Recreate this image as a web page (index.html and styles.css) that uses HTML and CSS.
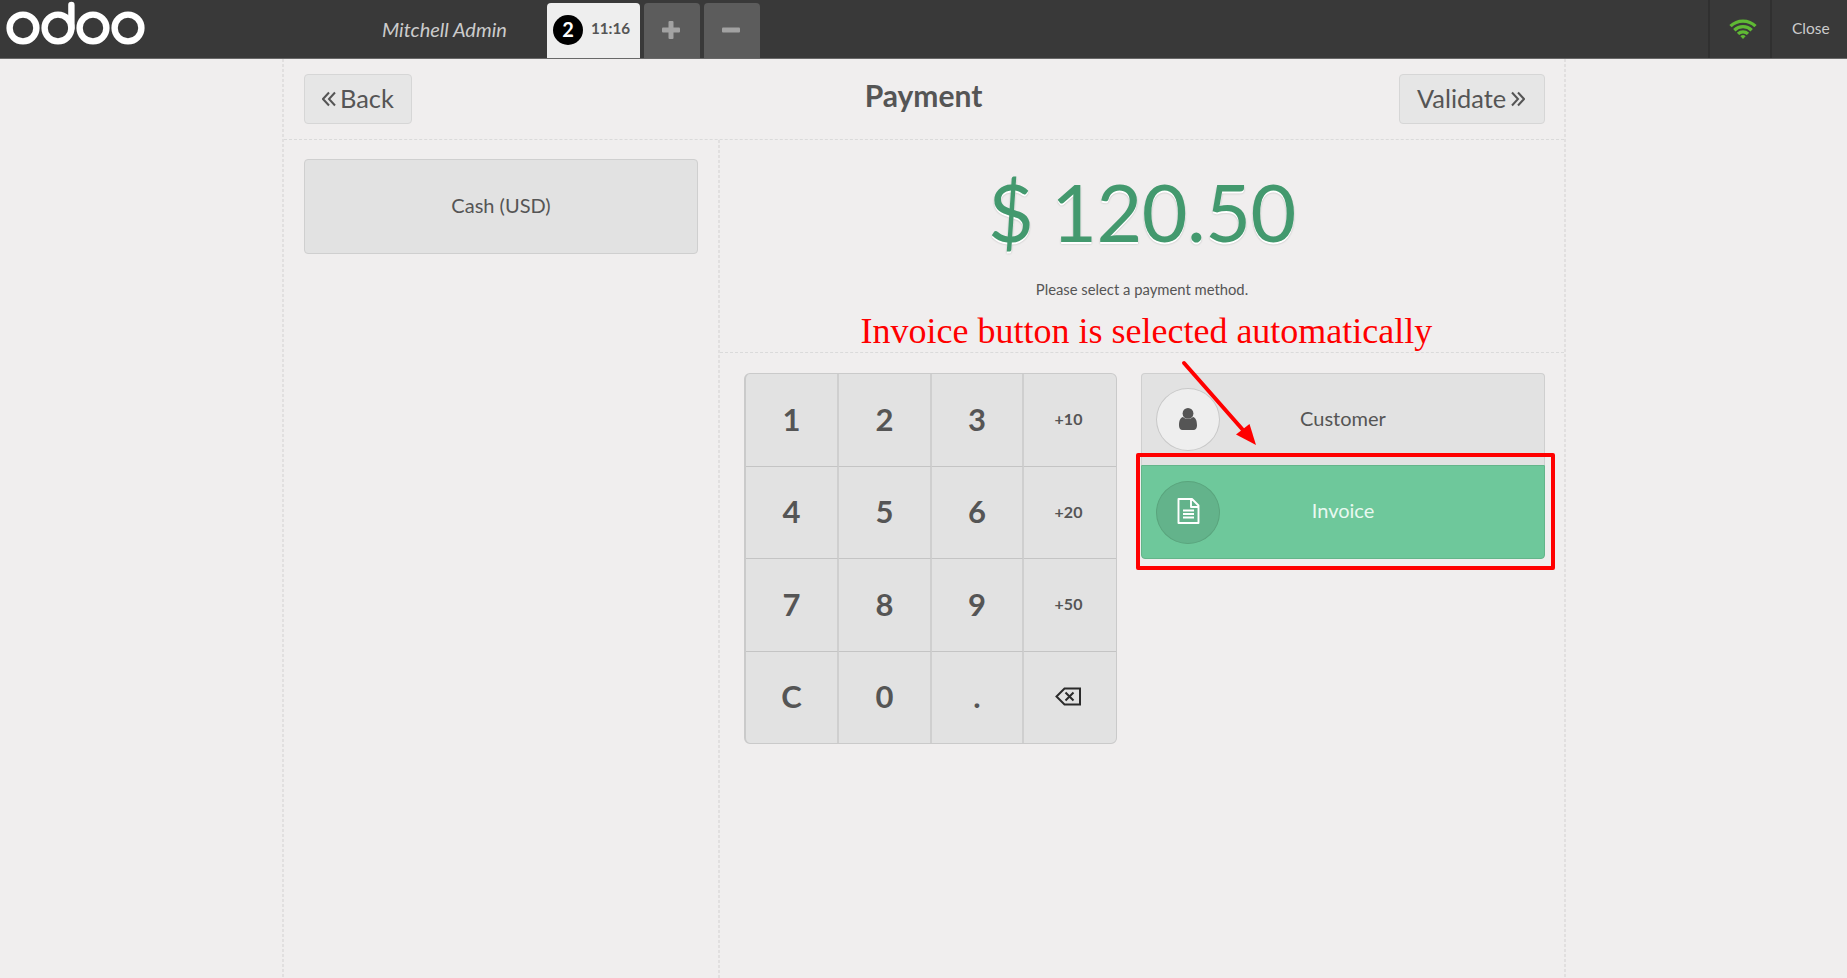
FILE: index.html
```html
<!DOCTYPE html>
<html lang="en">
<head>
<meta charset="utf-8">
<title>Payment</title>
<link rel="stylesheet" href="styles.css">
</head>
<body>
<div class="pos">
  <header class="topbar">
    <svg class="logo" width="150" height="58" viewBox="0 0 150 58" fill="none" stroke="#fff" stroke-width="6.4">
      <circle cx="23" cy="28" r="13.4"/><circle cx="58" cy="28" r="13.4"/><circle cx="93" cy="28" r="13.4"/><circle cx="128" cy="28" r="13.4"/>
      <path d="M71.4 5v23" stroke-linecap="round"/>
    </svg>
    <div class="username">Mitchell Admin</div>
    <div class="orders">
      <div class="order selected"><span class="badge">2</span><span class="time">11:16</span></div>
      <div class="order"><svg width="18" height="18" viewBox="0 0 18 18" fill="#a2a2a2"><rect x="6.5" width="5" height="18" rx="1"/><rect y="6.5" width="18" height="5" rx="1"/></svg></div>
      <div class="order"><svg width="18" height="18" viewBox="0 0 18 18" fill="#a2a2a2"><rect y="6.5" width="18" height="5" rx="1"/></svg></div>
    </div>
    <div class="status">
      <svg width="28" height="20" viewBox="0 0 28 20" fill="none" stroke="#5fb934" stroke-width="3.3">
        <path d="M1.500 7.200a17.800 17.800 0 0 1 25 0"/><path d="M5.300 11.200a12.400 12.400 0 0 1 17.400 0"/><path d="M9 14.900a7.200 7.200 0 0 1 10 0"/><path d="M11.400 17.300a3.600 3.600 0 0 1 5.200 0L14 20z" fill="#5fb934" stroke="none"/>
      </svg>
    </div>
    <div class="close">Close</div>
  </header>

  <main class="screen">
    <div class="heading">
      <div class="button back"><svg width="14" height="16" viewBox="0 0 14 16"><path d="M7 1.5L1 8l6 6.500M13 1.500L7 8l6 6.500"/></svg><span>Back</span></div>
      <h1>Payment</h1>
      <div class="button next"><span>Validate</span><svg width="14" height="16" viewBox="0 0 14 16"><path d="M1 1.500L7 8l-6 6.500M7 1.500L13 8l-6 6.500"/></svg></div>
    </div>
    <div class="columns">
      <section class="methods"><div class="method">Cash (USD)</div></section>
      <section class="details">
        <div class="due">
          <div class="total">$ 120.50</div>
          <div class="hint">Please select a payment method.</div>
        </div>
        <div class="controls">
          <div class="numpad">
            <div>1</div><div>2</div><div>3</div><div class="mode">+10</div>
            <div>4</div><div>5</div><div>6</div><div class="mode">+20</div>
            <div>7</div><div>8</div><div>9</div><div class="mode">+50</div>
            <div>C</div><div>0</div><div>.</div>
            <div><svg width="27" height="19" viewBox="0 0 27 19" fill="none" stroke="#2b2b2b" stroke-width="2"><path d="M9.500 1.500H25v16H9.500L1.500 9.500z"/><path d="M10.500 5.500l8 8M18.500 5.500l-8 8"/></svg></div>
          </div>
          <div class="actions">
            <div class="action">
              <span class="round"><svg width="18" height="22" viewBox="0 0 18 22" fill="#555"><path d="M4 9C1.300 9.700 0 12.500 0 17.500 0 20 1.300 22 3.500 22h11c2.200 0 3.500-2 3.500-4.500 0-5-1.300-7.800-4-8.500-1.200 1.300-3 2-5 2S5.200 10.300 4 9z"/><circle cx="9" cy="5.400" r="5.400"/></svg></span>
              <span>Customer</span>
            </div>
            <div class="action on">
              <span class="round"><svg width="23" height="26" viewBox="0 0 23 26" fill="none" stroke="#fff" stroke-width="1.900"><path d="M1.500 1h13.500l6.500 6.500V25h-20zM14 1v8h7.500M6 12.500h11M6 16h11M6 19.500h11" stroke-linejoin="round"/></svg></span>
              <span>Invoice</span>
            </div>
          </div>
        </div>
      </section>
    </div>
  </main>

  <div class="note">Invoice button is selected automatically</div>
  <div class="frame"></div>
  <svg class="arrow" width="76" height="88" viewBox="0 0 76 88"><path d="M4 5L63 72" stroke="#f00" stroke-width="4" stroke-linecap="round"/><path d="M76 87L56 76.500 69.500 66z" fill="#f00"/></svg>
</div>
</body>
</html>
```
FILE: styles.css
```css
* { box-sizing: border-box; }
body { margin: 0; background: #f0eeee; color: #555; font-family: Lato, sans-serif; overflow: hidden; }
svg { display: block; flex: none; }
.pos { position: relative; width: 1847px; height: 978px; overflow: hidden; display: flex; flex-direction: column; }

.topbar { display: flex; height: 59px; flex: none; background: #393939; border-bottom: 1px solid #686868; }
.logo { margin-right: 232px; }
.username { width: 165px; font-size: 20px; font-style: italic; line-height: 58px; color: #ccc; white-space: nowrap; }
.orders { display: flex; gap: 4px; padding-top: 3px; }
.order { width: 56px; height: 55px; display: flex; align-items: center; justify-content: center; background: #5c5c5c; border-radius: 4px 4px 0 0; padding: 0 2px 1px 0; }
.order.selected { width: 93px; background: #eee; justify-content: flex-start; padding-left: 6px; color: #555; }
.badge { width: 30px; height: 30px; margin-top: -1px; border-radius: 50%; background: #000; color: #fff; font-size: 20px; font-weight: 700; line-height: 29px; text-align: center; }
.time { margin: -5px 0 0 8px; font-size: 15.2px; font-weight: 700; }
.status { width: 62px; margin-left: auto; border-left: 2px solid #303030; display: flex; padding: 19px 0 0 19px; }
.close { width: 77px; border-left: 2px solid #303030; padding-left: 20px; font-size: 15.5px; line-height: 56px; color: #ccc; }

.screen { width: 1284px; flex: 1; margin-left: 282px; padding: 0 2px; display: flex; flex-direction: column;
  background: repeating-linear-gradient(#e1dfdf 0 3px, transparent 3px 5px) left / 2px 100% no-repeat, repeating-linear-gradient(#e1dfdf 0 3px, transparent 3px 5px) right / 2px 100% no-repeat; }
.heading { height: 81px; flex: none; display: flex; justify-content: space-between; padding: 15px 19px 0 20px; border-bottom: 1px dashed #dadada; }
.heading h1 { margin: 0; padding-left: 36px; font-size: 30px; font-weight: 700; line-height: 42px; }
.button { height: 50px; display: flex; align-items: center; gap: 4px; border: 1px solid #d6d6d6; border-radius: 4px; background: #e6e6e6; font-size: 25.4px; line-height: 44px; }
.button span { padding-bottom: 3px; }
.button svg { fill: none; stroke: #555; stroke-width: 2; }
.back { width: 108px; padding-left: 17px; }
.next { width: 146px; padding-left: 17px; gap: 5px; }
.columns { display: flex; flex: 1; }
.methods { width: 436px; background: repeating-linear-gradient(#e1dfdf 0 3px, transparent 3px 5px) right / 2px 100% no-repeat; padding: 19px 20px; }
.method { width: 394px; height: 95px; border: 1px solid #cfcfcf; border-radius: 4px; background: #e2e2e2; font-size: 20px; line-height: 91px; text-align: center; }
.details { flex: 1; }
.due { height: 213px; border-bottom: 1px dashed #dadada; text-align: center; }
.total { padding-top: 24px; font-size: 79px; line-height: 96px; letter-spacing: -0.5px; word-spacing: -2px; color: #43996e; text-shadow: 0 2px #fff, 0 2px 2px rgba(0,0,0,.27); }
.hint { margin-top: 19px; font-size: 14.8px; line-height: 20px; }
.controls { display: flex; gap: 24px; padding: 20px 0 0 24px; }
.numpad { width: 373px; height: 371px; display: grid; grid-template-columns: 93px 93px 92px 92px; grid-template-rows: 93px 92px 93px 91px; border: 1px solid #cacaca; border-left-width: 2px; border-radius: 6px; background: #e2e2e2; font-size: 31px; font-weight: 700; overflow: hidden; }
.numpad div { display: flex; align-items: center; justify-content: center; border-right: 2px solid #cfcfcf; border-bottom: 1px solid #c4c4c4; padding-bottom: 3px; }
.numpad div:nth-child(4n) { border-right: 0; padding-right: 3px; }
.numpad div:nth-child(n+13) { border-bottom: 0; }
.numpad .mode { font-size: 16px; }
.actions { width: 404px; }
.action { height: 92px; display: flex; align-items: center; justify-content: center; position: relative; border: 1px solid #cfcfcf; border-bottom: 0; border-radius: 4px 4px 0 0; background: #e2e2e2; font-size: 20px; padding-bottom: 4px; }
.action.on { height: 94px; border: 1px solid #64b58a; border-radius: 0 0 4px 4px; background: #6ec89b; color: #e9f8f0; }
.round { position: absolute; left: 14px; top: 14px; width: 64px; height: 63px; border: 1px solid #c8c8c8; border-radius: 50%; background: #eee; display: flex; align-items: center; justify-content: center; padding-bottom: 1px; }
.on .round { top: 15px; border-color: #5aa47d; background: #63b38b; padding-bottom: 3px; }

.note { position: absolute; left: 860.5px; top: 310px; font: 36px/42px "Liberation Serif", serif; color: #f00; white-space: nowrap; }
.frame { position: absolute; left: 1136px; top: 453px; width: 419px; height: 117px; border: 4px solid #f00; border-radius: 2px; }
.arrow { position: absolute; left: 1180px; top: 358px; }
```
